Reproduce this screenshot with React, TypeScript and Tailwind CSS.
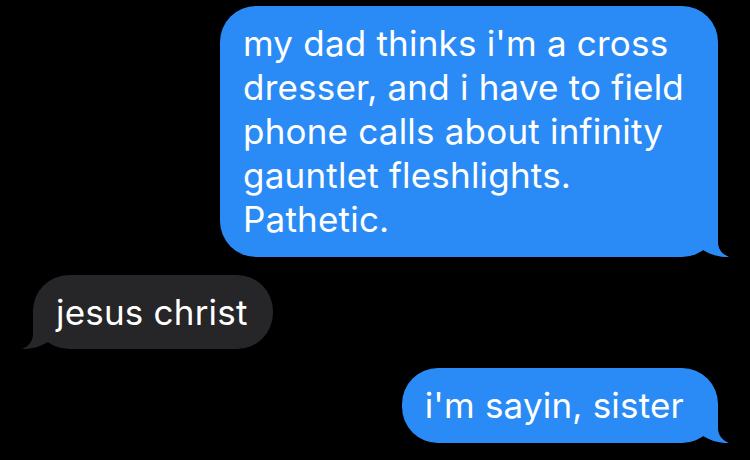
const BLUE = "bg-[#2a8bf7]";

function Tail({ side, color }: { side: "left" | "right"; color: string }) {
    // iMessage style tail, drawn at the bottom corner of the bubble
    if (side === "right") {
        return (
            <svg
                className="absolute bottom-0 right-[-14px]"
                width="32"
                height="40"
                viewBox="0 0 32 40"
                aria-hidden
            >
                <path
                    d="M1 0 H18 V25 C18 32 22 37 29 40 C21 40.5 11 38 3 33 L1 0 Z"
                    fill={color}
                />
            </svg>
        );
    }
    return (
        <svg
            className="absolute bottom-0 left-[-14px]"
            width="32"
            height="40"
            viewBox="0 0 32 40"
            aria-hidden
        >
            <path
                d="M31 0 H14 V25 C14 32 10 37 3 40 C11 40.5 21 38 29 33 L31 0 Z"
                fill={color}
            />
        </svg>
    );
}

interface BubbleProps {
    lines: string[];
    sent?: boolean;
}

function Bubble({ lines, sent }: BubbleProps) {
    return (
        <div
            className={
                sent
                    ? `relative self-end mr-[32px] rounded-[36px] ${BLUE} pl-[23px] pr-[34px] pt-[15px] pb-[16px]`
                    : "relative self-start ml-[33px] rounded-[36px] bg-[#262628] pl-[23px] pr-[25px] pt-[15px] pb-[15px]"
            }
        >
            {lines.map((line) => (
                <div key={line} className="whitespace-nowrap">
                    {line}
                </div>
            ))}
            <Tail side={sent ? "right" : "left"} color={sent ? "#2a8bf7" : "#262628"} />
        </div>
    );
}

export default function App() {
    return (
        <div
            className="w-[750px] h-[460px] overflow-hidden bg-black flex flex-col pt-[6px] text-white text-[35px] leading-[44px] tracking-[0.2px]"
            style={{ fontFamily: "Inter, 'Liberation Sans', sans-serif" }}
        >
            <Bubble
                sent
                lines={[
                    "my dad thinks i'm a cross",
                    "dresser, and i have to field",
                    "phone calls about infinity",
                    "gauntlet fleshlights.",
                    "Pathetic.",
                ]}
            />
            <div className="mt-[18px] flex flex-col">
                <Bubble lines={["jesus christ"]} />
            </div>
            <div className="mt-[19px] flex flex-col">
                <Bubble sent lines={["i'm sayin, sister"]} />
            </div>
        </div>
    );
}
